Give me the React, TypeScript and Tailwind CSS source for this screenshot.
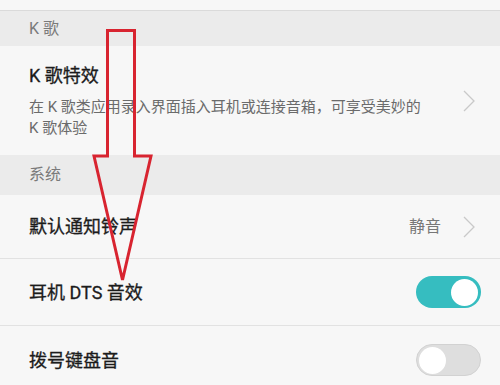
import React from 'react'

function Chevron() {
  return (
    <svg width="14" height="22" viewBox="0 0 14 22" fill="none" className="shrink-0">
      <path d="M2 1 L12 11 L2 21" stroke="#c9c9c9" strokeWidth="1.3" />
    </svg>
  )
}

function Toggle({ on }: { on: boolean }) {
  return on ? (
    <div className="flex h-[32px] w-[65px] items-center justify-end rounded-full bg-[#36bdc0] p-[3px]">
      <div className="h-[27px] w-[27px] rounded-full bg-white" />
    </div>
  ) : (
    <div className="flex h-[32px] w-[65px] items-center justify-start rounded-full border border-[#d2d2d2] bg-[#dedede] p-[2px]">
      <div className="h-[27px] w-[27px] rounded-full bg-white" />
    </div>
  )
}

function Header({ title, h }: { title: string; h: string }) {
  return (
    <div className={`flex items-center bg-[#ebebeb] pl-[29px] text-[16px] text-[#7a7a7a] ${h}`}>
      {title}
    </div>
  )
}

export default function App() {
  return (
    <div
      className="relative h-[385px] w-[500px] overflow-hidden bg-[#f7f7f7]"
      style={{ fontFamily: 'Roboto, "Noto Sans CJK SC", sans-serif' }}
    >
      <div className="h-[11px] border-b border-[#dadada] bg-[#f7f7f7]" />
      <Header title="K 歌" h="h-[35px]" />

      <div className="flex h-[109px] items-center pl-[29px] pr-[24px]">
        <div className="flex-1 pt-[2px]">
          <div className="text-[18px] leading-[24px] text-[#1c1c1c] [-webkit-text-stroke:0.3px_#1c1c1c]">K 歌特效</div>
          <div className="mt-[9px] text-[15px] leading-[21px] text-[#6b6b6b]">
            在 K 歌类应用录入界面插入耳机或连接音箱，可享受美妙的
            <br />K 歌体验
          </div>
        </div>
        <Chevron />
      </div>

      <Header title="系统" h="h-[40px]" />

      <div className="flex h-[64px] items-center border-b border-[#e2e2e2] pl-[29px] pr-[24px]">
        <div className="flex-1 text-[18px] text-[#1c1c1c] [-webkit-text-stroke:0.3px_#1c1c1c]">默认通知铃声</div>
        <div className="mr-[21px] text-[16px] text-[#777]">静音</div>
        <Chevron />
      </div>

      <div className="flex h-[67px] items-center border-b border-[#e2e2e2] pl-[29px] pr-[19px]">
        <div className="flex-1 text-[18px] text-[#1c1c1c] [-webkit-text-stroke:0.3px_#1c1c1c]">耳机 DTS 音效</div>
        <Toggle on />
      </div>

      <div className="flex h-[68px] items-center pl-[29px] pr-[19px]">
        <div className="flex-1 text-[18px] text-[#1c1c1c] [-webkit-text-stroke:0.3px_#1c1c1c]">拨号键盘音</div>
        <Toggle on={false} />
      </div>

      <svg className="pointer-events-none absolute left-0 top-0" width="500" height="385" viewBox="0 0 500 385">
        <polygon
          points="107.5,30.5 134.5,30.5 134.5,156 151,156 122.5,280 94,156 107.5,156"
          fill="none"
          stroke="#d82430"
          strokeWidth="3"
          strokeLinejoin="miter"
        />
      </svg>
    </div>
  )
}
